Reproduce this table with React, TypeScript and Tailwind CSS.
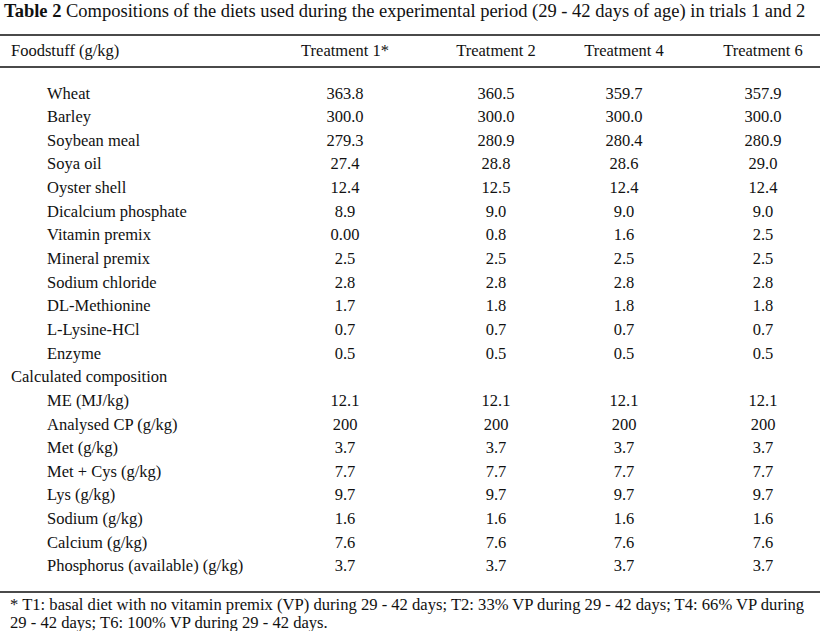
const ingredients: [string, string[]][] = [
  ["Wheat", ["363.8", "360.5", "359.7", "357.9"]],
  ["Barley", ["300.0", "300.0", "300.0", "300.0"]],
  ["Soybean meal", ["279.3", "280.9", "280.4", "280.9"]],
  ["Soya oil", ["27.4", "28.8", "28.6", "29.0"]],
  ["Oyster shell", ["12.4", "12.5", "12.4", "12.4"]],
  ["Dicalcium phosphate", ["8.9", "9.0", "9.0", "9.0"]],
  ["Vitamin premix", ["0.00", "0.8", "1.6", "2.5"]],
  ["Mineral premix", ["2.5", "2.5", "2.5", "2.5"]],
  ["Sodium chloride", ["2.8", "2.8", "2.8", "2.8"]],
  ["DL-Methionine", ["1.7", "1.8", "1.8", "1.8"]],
  ["L-Lysine-HCl", ["0.7", "0.7", "0.7", "0.7"]],
  ["Enzyme", ["0.5", "0.5", "0.5", "0.5"]],
];

const calculated: [string, string[]][] = [
  ["ME (MJ/kg)", ["12.1", "12.1", "12.1", "12.1"]],
  ["Analysed CP (g/kg)", ["200", "200", "200", "200"]],
  ["Met (g/kg)", ["3.7", "3.7", "3.7", "3.7"]],
  ["Met + Cys (g/kg)", ["7.7", "7.7", "7.7", "7.7"]],
  ["Lys (g/kg)", ["9.7", "9.7", "9.7", "9.7"]],
  ["Sodium (g/kg)", ["1.6", "1.6", "1.6", "1.6"]],
  ["Calcium (g/kg)", ["7.6", "7.6", "7.6", "7.6"]],
  ["Phosphorus (available) (g/kg)", ["3.7", "3.7", "3.7", "3.7"]],
];

const grid = "grid grid-cols-[295px_151px_128px_139px_1fr] items-center";

function Row({ label, values, indent = true }: { label: string; values?: string[]; indent?: boolean }) {
  return (
    <div className={`${grid} h-[23.65px]`}>
      <div className={indent ? "pl-[47px]" : "pl-[11px]"}>{label}</div>
      {values?.map((v, i) => (
        <div key={i} className="w-[100px] text-center">
          {v}
        </div>
      ))}
    </div>
  );
}

export default function App() {
  return (
    <div className="w-[824px] h-[631px] overflow-hidden bg-white text-[#111] font-['Liberation_Serif',serif] text-[16.5px] leading-none">
      <h1 className="pl-[4px] h-[23px] flex items-center whitespace-nowrap text-[18.5px]">
        <span className="font-bold">Table 2</span>&nbsp;Compositions of the diets used during the experimental period (29 - 42 days of age) in trials 1 and 2
      </h1>

      <div className="mt-[11px] mr-[4px] border-t-2 border-[#4a4a4a]" />
      <div className={`${grid} h-[30px]`}>
        <div className="pl-[11px]">Foodstuff (g/kg)</div>
        <div className="w-[100px] text-center">Treatment 1*</div>
        <div className="w-[100px] text-center">Treatment 2</div>
        <div className="w-[100px] text-center">Treatment 4</div>
        <div className="w-[100px] text-center">Treatment 6</div>
      </div>
      <div className="mr-[4px] border-t-2 border-[#4a4a4a]" />

      <div className="pt-[14px] pb-[13px]">
        {ingredients.map(([label, values]) => (
          <Row key={label} label={label} values={values} />
        ))}
        <Row label="Calculated composition" indent={false} />
        {calculated.map(([label, values]) => (
          <Row key={label} label={label} values={values} />
        ))}
      </div>

      <div className="mr-[4px] border-t-2 border-[#4a4a4a]" />
      <p className="pl-[10px] pt-[3px] leading-[18px] text-[16.6px] whitespace-nowrap">
        * T1: basal diet with no vitamin premix (VP) during 29 - 42 days; T2: 33% VP during 29 - 42 days; T4: 66% VP during
        <br />
        29 - 42 days; T6: 100% VP during 29 - 42 days.
      </p>
    </div>
  );
}
